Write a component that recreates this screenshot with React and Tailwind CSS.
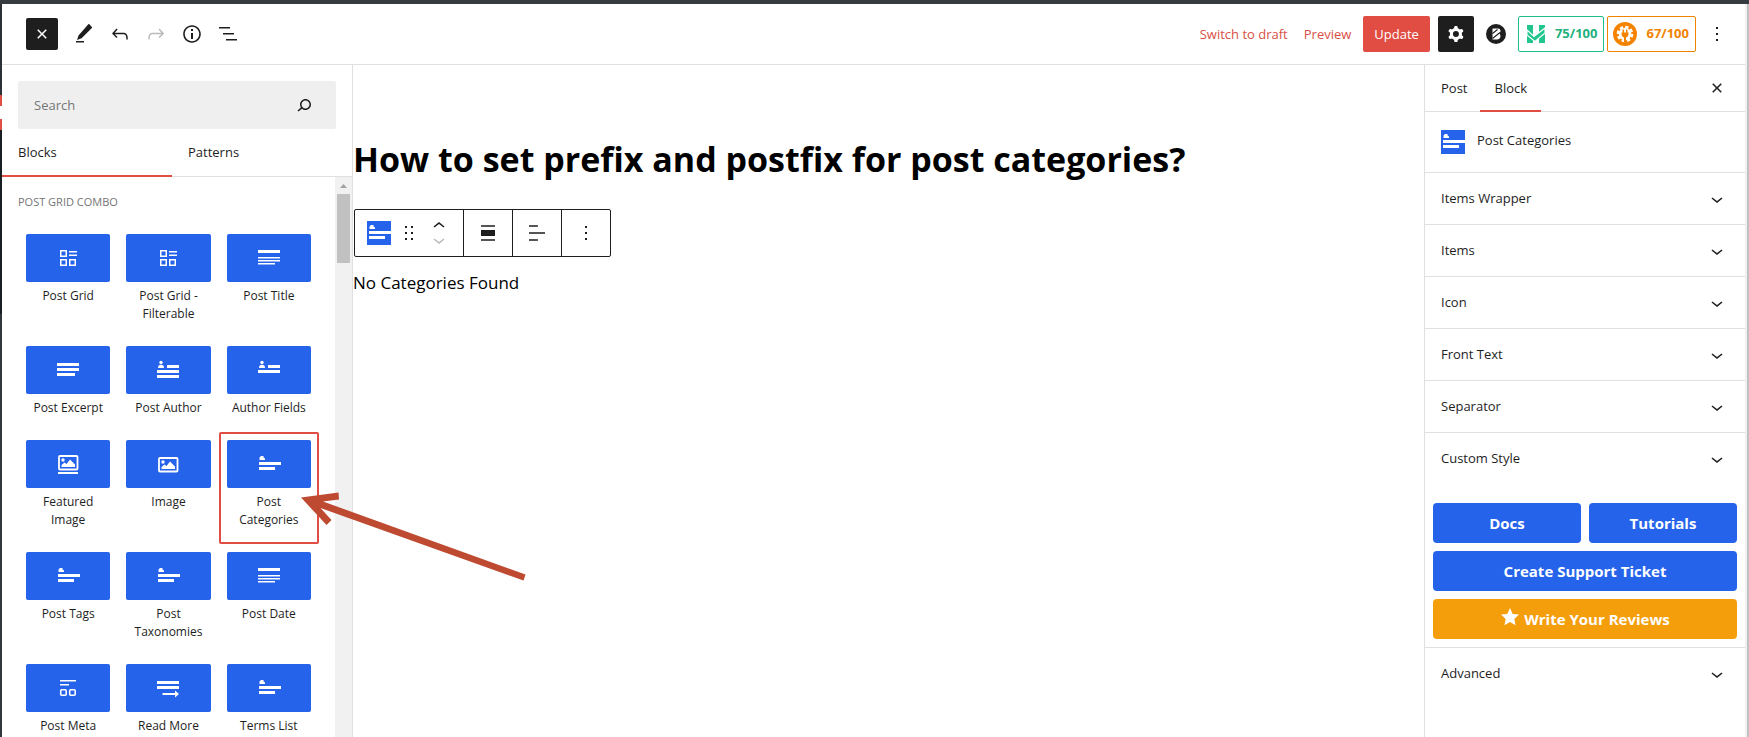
import React from "react";

const P = {
  close: "M12 13.06l3.712 3.713 1.061-1.06L13.061 12l3.712-3.712-1.06-1.06L12 10.938 8.288 7.227l-1.061 1.06L10.939 12l-3.712 3.712 1.06 1.061L12 13.061z",
  undo: "M18.3 11.7c-.6-.6-1.4-.9-2.3-.9H6.7l2.9-3.3-1.1-1-4.5 5L8.5 16l1-1-2.7-2.7H16c.5 0 .9.2 1.3.5 1 1 1 3.4 1 4.5v.3h1.5v-.2c0-1.5 0-4.3-1.5-5.7z",
  redo: "M15.6 6.5l-1.1 1 2.9 3.3H8c-.9 0-1.7.3-2.3.9-1.4 1.5-1.4 4.2-1.4 5.6v.2h1.5v-.3c0-1.1 0-3.5 1-4.5.3-.3.7-.5 1.3-.5h9.2L14.5 15l1.1 1.1 4.6-4.6-4.6-5z",
  info: "M12 3.2c-4.8 0-8.8 3.9-8.8 8.8 0 4.8 3.9 8.8 8.8 8.8 4.8 0 8.8-3.9 8.8-8.8 0-4.8-4-8.8-8.8-8.8zm0 16c-4 0-7.2-3.3-7.2-7.2C4.8 8 8 4.8 12 4.8s7.2 3.3 7.2 7.2c0 4-3.2 7.2-7.2 7.2zM11 17h2v-6h-2v6zm0-8h2V7h-2v2z",
  list: "M3 5h11v1.5H3V5Zm4 6h11v1.5H7V11Zm14 6H10v1.5h11V17Z",
  search: "M13.5 6C10.5 6 8 8.5 8 11.5c0 1.1.3 2.1.9 3l-3.4 3 1 1.1 3.4-2.9c1 .9 2.2 1.4 3.6 1.4 3 0 5.5-2.5 5.5-5.5C19 8.5 16.5 6 13.5 6zm0 9.5c-2.2 0-4-1.8-4-4s1.8-4 4-4 4 1.8 4 4-1.8 4-4 4z",
  down: "M17.5 11.6L12 16l-5.5-4.4.9-1.2L12 14l4.5-3.6 1 1.2z",
  up: "M6.5 12.4L12 8l5.5 4.4-.9 1.2L12 10l-4.5 3.6-1-1.2z",
  more: "M13 19h-2v-2h2v2zm0-6h-2v-2h2v2zm0-6h-2V5h2v2z",
  drag: "M8 7h2V5H8v2zm0 6h2v-2H8v2zm0 6h2v-2H8v2zm6-14v2h2V5h-2zm0 8h2v-2h-2v2zm0 6h2v-2h-2v2z",
  center: "M5 15h14V9H5v6zm0 4.8h14v-1.5H5v1.5zM5 4.2v1.5h14V4.2H5z",
  left: "M4 19.8h8.9v-1.5H4v1.5zm8.9-15.6H4v1.5h8.9V4.2zm-8.9 7v1.5h16v-1.5H4z",
  gear: "M10.289 4.836A1 1 0 0111.275 4h1.306a1 1 0 01.987.836l.244 1.466c.787.26 1.503.679 2.108 1.218l1.393-.522a1 1 0 011.216.437l.653 1.13a1 1 0 01-.23 1.273l-1.148.944a6.025 6.025 0 010 2.435l1.149.946a1 1 0 01.23 1.272l-.653 1.13a1 1 0 01-1.216.437l-1.394-.522c-.605.54-1.32.958-2.108 1.218l-.244 1.466a1 1 0 01-.987.836h-1.306a1 1 0 01-.986-.836l-.244-1.466a5.995 5.995 0 01-2.108-1.218l-1.394.522a1 1 0 01-1.217-.436l-.653-1.131a1 1 0 01.23-1.272l1.149-.946a6.026 6.026 0 010-2.435l-1.148-.944a1 1 0 01-.23-1.272l.653-1.131a1 1 0 011.217-.437l1.393.522a5.994 5.994 0 012.108-1.218l.244-1.466zM14.929 12a3 3 0 11-6 0 3 3 0 016 0z",
};

function Icon({ name, className = "size-6", viewBox = "0 0 24 24" }) {
  return (
    <svg viewBox={viewBox} className={className} fill="currentColor" fillRule="evenodd" aria-hidden="true">
      <path d={P[name]} />
    </svg>
  );
}

const terms = (
  <>
    <path d="M2.500 8V5.500L4 4h2.500v1.500L8 6.500V8z" />
    <rect x="2" y="10" width="22" height="3" />
    <rect x="2" y="15" width="16" height="3" />
  </>
);
const gridGlyph = (
  <>
    <path fillRule="evenodd" d="M4 4h7v7H4zM5.500 5.500v4h4v-4zM4 13h7v7H4zM5.500 14.500v4h4v-4zM13 13h7v7h-7zM14.500 14.500v4h4v-4z" />
    <rect x="13" y="5" width="8" height="1.500" />
    <rect x="13" y="8.500" width="8" height="1.500" />
  </>
);
const title = (
  <>
    <rect x="1" y="4" width="22" height="3" />
    <rect x="1" y="11" width="22" height="1.500" />
    <rect x="1" y="14" width="22" height="1.500" />
    <rect x="1" y="17" width="17" height="1.500" />
  </>
);
const person = (
  <>
    <circle cx="5" cy="4.500" r="1.700" />
    <path d="M2 10c0-2.500 1-3.200 3-3.200S8 7.500 8 10z" />
    <rect x="11" y="7" width="12" height="3" />
    <rect x="1" y="12" width="22" height="3" />
  </>
);
const photo = (y) => (
  <g transform={`translate(0 ${y})`}>
    <rect x="3" y="1" width="18.500" height="13.500" rx="1" fill="none" stroke="currentColor" strokeWidth="1.800" />
    <circle cx="7" cy="5" r="1.700" />
    <path d="M5.500 12V10l3-2.500L10.500 9 14 4.500 19 9.500V12z" />
  </g>
);

const glyphs = {
  grid: gridGlyph,
  title,
  terms,
  excerpt: (
    <>
      <rect x="1" y="5" width="22" height="3" />
      <rect x="1" y="10" width="22" height="3" />
      <rect x="1" y="15" width="18" height="3" />
    </>
  ),
  author: (
    <>
      {person}
      <rect x="1" y="17" width="22" height="3" />
    </>
  ),
  fields: person,
  featured: (
    <>
      {photo(3)}
      <rect x="2" y="20" width="20" height="2" />
    </>
  ),
  image: photo(5),
  meta: (
    <>
      <rect x="4" y="4" width="16" height="1.500" />
      <rect x="4" y="8" width="9" height="1.500" />
      <rect x="4.700" y="13.700" width="5.500" height="5.500" rx="1" fill="none" stroke="currentColor" strokeWidth="1.600" />
      <rect x="13.700" y="13.700" width="5.500" height="5.500" rx="1" fill="none" stroke="currentColor" strokeWidth="1.600" />
    </>
  ),
  more: (
    <>
      <rect x="1" y="5" width="22" height="3" />
      <rect x="1" y="10" width="22" height="3" />
      <path d="M6.500 17H19v-2.500l4 3.500-4 3.500V19H6.500z" />
    </>
  ),
};

function Glyph({ name, className = "" }) {
  return (
    <svg viewBox="0 0 24 24" className={`size-6 shrink-0 overflow-visible text-white ${className}`} fill="currentColor" aria-hidden="true">
      {glyphs[name]}
    </svg>
  );
}

const blocks = [
  ["Post Grid", "grid"],
  ["Post Grid - Filterable", "grid"],
  ["Post Title", "title"],
  ["Post Excerpt", "excerpt"],
  ["Post Author", "author"],
  ["Author Fields", "fields"],
  ["Featured Image", "featured"],
  ["Image", "image"],
  ["Post Categories", "terms"],
  ["Post Tags", "terms"],
  ["Post Taxonomies", "terms"],
  ["Post Date", "title"],
  ["Post Meta", "meta"],
  ["Read More", "more"],
  ["Terms List", "terms"],
];

function BlockButton({ label, glyph, selected }) {
  return (
    <button className={`flex flex-col items-stretch justify-start rounded-xs p-2 ${selected ? "outline-2 -outline-offset-2 outline-[#e14d43]" : ""}`}>
      <span className="flex h-12 items-center justify-center rounded-xs bg-[#2563eb]">
        <Glyph name={glyph} />
      </span>
      <span className="px-0.5 pt-[5px] pb-[7px] text-center text-[12px] leading-[18px]">{label}</span>
    </button>
  );
}

function PanelRow({ label }) {
  return (
    <button className="flex h-[52px] w-full items-center justify-between border-t border-[#e0e0e0] px-4 text-left">
      {label}
      <Icon name="down" />
    </button>
  );
}

function Header() {
  return (
    <header className="flex h-[61px] shrink-0 items-center border-b border-[#e0e0e0] pr-[10px] pl-6">
      <button aria-label="Close inserter" className="mr-2 flex size-8 items-center justify-center rounded-xs bg-[#1e1e1e] text-white">
        <Icon name="close" />
      </button>
      <button aria-label="Tools" className="flex w-9 justify-center">
        <svg viewBox="0 0 24 24" className="size-6" fill="currentColor" aria-hidden="true">
          <path d="M17.300 2.300l2.600 2.600c.3.300.3.700 0 1L9.600 16.200 5 18l1.500-4.500L16.300 2.300c.3-.3.700-.3 1 0z" />
          <rect x="4" y="19" width="8" height="1.500" />
        </svg>
      </button>
      <button aria-label="Undo" className="flex w-9 justify-center"><Icon name="undo" /></button>
      <button aria-label="Redo" className="flex w-9 justify-center text-[#bbb]"><Icon name="redo" /></button>
      <button aria-label="Details" className="flex w-9 justify-center"><Icon name="info" /></button>
      <button aria-label="List view" className="flex w-9 justify-center"><Icon name="list" /></button>

      <div className="ml-auto flex items-center">
        <button className="mr-4 pt-0.5 text-[#d94f45]">Switch to draft</button>
        <button className="mr-3 pt-0.5 text-[#d94f45]">Preview</button>
        <button className="mr-2 h-9 rounded-xs bg-[#e14d43] px-[11px] pt-0.5 text-white">Update</button>
        <div className="flex items-center gap-[3px]">
          <button aria-label="Settings" className="flex size-9 items-center justify-center rounded-xs bg-[#1e1e1e] text-white">
            <Icon name="gear" />
          </button>
          <button aria-label="Block styles" className="flex w-[38px] justify-center">
            <svg viewBox="0 0 20 20" className="size-5" aria-hidden="true">
              <circle cx="10" cy="10" r="10" fill="#1e1e1e" />
              <path d="M6.500 4.500H12c2.800 0 3.300 3.400 1.300 5 2.200 1.700 1.200 6-2 6H6.500z" fill="#fff" />
              <path d="M6.500 9.500L11.500 5.500M6.500 14.500l7.500-6" stroke="#1e1e1e" strokeWidth="1.100" />
            </svg>
          </button>
          <button className="flex h-9 items-center gap-[10px] rounded-xs border border-[#1fbf8a] pr-1.5 pl-2 font-bold text-[#22b07d]">
            <svg viewBox="0 0 18 18" className="size-[18px]" aria-hidden="true">
              <path d="M0 0h6v18H0zM12 0h6v18h-6z" fill="#21c58e" />
              <path d="M0 5l7 6.500L18 3v5L8 16.500 0 10z" fill="#21c58e" stroke="#fff" strokeWidth="1.100" />
            </svg>
            75/100
          </button>
          <button className="flex h-9 items-center gap-[9px] rounded-xs border border-[#f08300] pr-1.5 pl-[5px] font-bold text-[#f08300]">
            <svg viewBox="0 0 24 24" className="size-6" aria-hidden="true">
              <circle cx="12" cy="12" r="12" fill="#f58300" />
              <circle cx="12" cy="12" r="6.300" fill="#fff" />
              <circle cx="12" cy="12" r="7" fill="none" stroke="#fff" strokeWidth="2.600" strokeDasharray="3.300 2.200" />
              <path d="M8.500 10.500h7v1.500c0 2-1.200 3.200-2.500 3.500V20h-2v-4.500C9.700 15.200 8.500 14 8.500 12zM9.500 7.500h1.500v3H9.500zM13 7.500h1.500v3H13z" fill="#f58300" />
            </svg>
            67/100
          </button>
          <button aria-label="Options" className="flex w-9 justify-center"><Icon name="more" /></button>
        </div>
      </div>
    </header>
  );
}

function Inserter() {
  return (
    <aside className="flex w-[351px] shrink-0 flex-col border-r border-[#e0e0e0]">
      <label className="mx-4 mt-4 flex h-12 shrink-0 items-center rounded-xs bg-[#efefef] pr-5 pl-4">
        <input type="search" aria-label="Search for blocks" placeholder="Search" className="min-w-0 flex-1 bg-transparent pt-0.5 outline-none placeholder:text-[#757575]" />
        <Icon name="search" />
      </label>
      <div className="flex h-12 shrink-0 border-b border-[#e0e0e0] font-medium">
        <button className="-mb-px w-[170px] border-b-2 border-[#e14d43] pt-0.5 pl-4 text-left">Blocks</button>
        <button className="flex-1 pt-px pl-4 text-left">Patterns</button>
      </div>
      <div className="flex min-h-0 flex-1">
        <div className="min-w-0 flex-1 overflow-hidden px-4">
          <h2 className="py-4 text-[11px] leading-[17px] font-medium text-[#757575] uppercase">Post Grid Combo</h2>
          <div className="grid grid-cols-3">
            {blocks.map(([label, glyph]) => (
              <BlockButton key={label} label={label} glyph={glyph} selected={label === "Post Categories"} />
            ))}
          </div>
        </div>
        <div className="flex w-[17px] flex-col items-center bg-[#f1f1f1]">
          <svg viewBox="0 0 17 17" className="size-[17px]" fill="#a3a3a3" aria-hidden="true">
            <path d="M5 11l3.500-4L12 11z" />
          </svg>
          <div className="h-[69px] w-[13px] bg-[#c1c1c1]" />
        </div>
      </div>
    </aside>
  );
}

function Canvas() {
  return (
    <main className="min-w-0 flex-1 pt-[70px] text-black">
      <h1 className="text-[34px] leading-[48px] font-bold">How to set prefix and postfix for post categories?</h1>
      <div role="toolbar" className="mt-[26px] ml-px flex h-12 w-fit divide-x divide-[#1e1e1e] rounded-xs border border-[#1e1e1e] text-[#1e1e1e]">
        <div className="flex items-center gap-1.5 px-3">
          <button aria-label="Post Categories"><Glyph name="terms" className="bg-[#2563eb]" /></button>
          <button aria-label="Drag"><Icon name="drag" /></button>
          <div className="flex flex-col">
            <button aria-label="Move up"><Icon name="up" className="h-4 w-6" viewBox="0 3 24 16" /></button>
            <button aria-label="Move down" className="text-[#bbb]"><Icon name="down" className="h-4 w-6" viewBox="0 5 24 16" /></button>
          </div>
        </div>
        <button aria-label="Align" className="flex w-[49px] items-center justify-center"><Icon name="center" /></button>
        <button aria-label="Align text" className="flex w-[49px] items-center justify-center"><Icon name="left" /></button>
        <button aria-label="Options" className="flex w-12 items-center justify-center"><Icon name="more" /></button>
      </div>
      <p className="mt-3.5 text-[17px] leading-6">No Categories Found</p>
    </main>
  );
}

function Settings() {
  return (
    <aside className="w-[321px] shrink-0 border-l border-[#e0e0e0]">
      <div className="flex h-[47px] border-b border-[#e0e0e0] pr-[10px]">
        <button className="pt-px pr-[13px] pl-4 font-medium">Post</button>
        <button className="-mb-px border-b-2 border-[#e14d43] px-[14px] pt-0.5">Block</button>
        <button aria-label="Close settings" className="ml-auto flex w-9 items-center justify-center"><Icon name="close" /></button>
      </div>
      <div className="flex h-[60px] items-start gap-3 px-4 pt-[18px]">
        <Glyph name="terms" className="bg-[#2563eb]" />
        <h2 className="leading-5">Post Categories</h2>
      </div>
      <PanelRow label="Items Wrapper" />
      <PanelRow label="Items" />
      <PanelRow label="Icon" />
      <PanelRow label="Front Text" />
      <PanelRow label="Separator" />
      <PanelRow label="Custom Style" />
      <div className="grid grid-cols-2 gap-2 px-2 pt-[19px] pb-2 text-center text-[15px] leading-10 font-bold text-white">
        <a href="#docs" className="rounded-sm bg-[#2563eb]">Docs</a>
        <a href="#tutorials" className="rounded-sm bg-[#2563eb]">Tutorials</a>
        <a href="#support" className="col-span-2 rounded-sm bg-[#2563eb]">Create Support Ticket</a>
        <a href="#reviews" className="col-span-2 flex items-center justify-center gap-1 rounded-sm bg-[#f59e0b]">
          <svg viewBox="0 0 20 20" className="mb-1 size-5" fill="currentColor" aria-hidden="true">
            <path d="M10 1l2.700 5.900 6.300.7-4.700 4.300 1.300 6.300L10 15l-5.600 3.200 1.300-6.300L1 7.600l6.300-.7z" />
          </svg>
          Write Your Reviews
        </a>
      </div>
      <PanelRow label="Advanced" />
    </aside>
  );
}

export default function App() {
  return (
    <div className="relative flex h-screen flex-col overflow-hidden bg-white font-['Open_Sans','Noto_Sans',sans-serif] text-[13px] text-[#1e1e1e]">
      <div className="h-1 shrink-0 bg-[#363b40]" />
      <div className="flex min-h-0 flex-1">
        <div className="flex w-0.5 shrink-0 flex-col bg-[#32373c]">
          <div className="h-[91px] bg-[#2c3136]" />
          <div className="flex h-[35px] flex-col justify-center bg-[#e14d43]">
            <div className="h-[13px] bg-white" />
          </div>
          <div className="h-[184px] bg-[#191e23]" />
        </div>
        <div className="flex min-w-0 flex-1 flex-col">
          <Header />
          <div className="flex min-h-0 flex-1">
            <Inserter />
            <Canvas />
            <Settings />
          </div>
        </div>
        <div className="w-0.5 shrink-0 bg-[#f1f1f1]" />
        <div className="w-0.5 shrink-0 bg-[#c1c1c1]" />
      </div>
      <svg viewBox="0 0 226 90" className="pointer-events-none absolute top-[491px] left-[300px] h-[90px] w-[226px]" fill="#be4a31" aria-hidden="true">
        <path d="M1 6.500L38.500 1.500L39 8.500L23 10.500L225.500 83.500L223.500 89.500L20.500 17L31.500 29L26.500 34Z" />
      </svg>
    </div>
  );
}
